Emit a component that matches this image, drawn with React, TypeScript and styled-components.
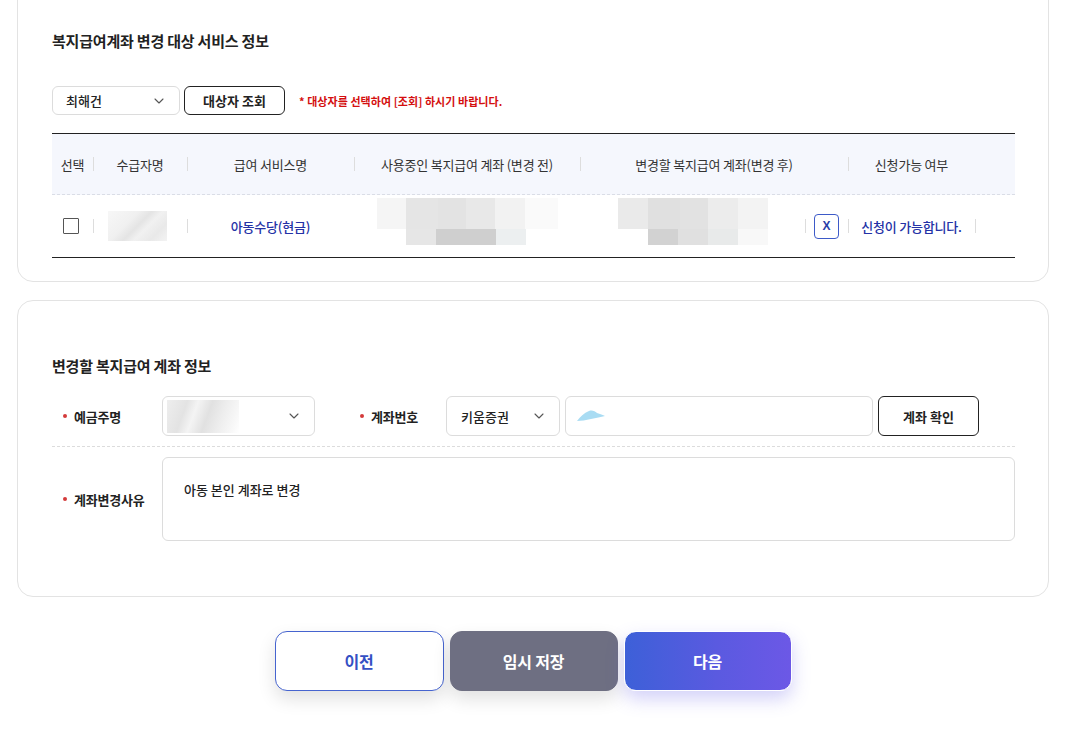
import React from "react";
import styled, { createGlobalStyle } from "styled-components";
import { ChevronDown } from "lucide-react";

const Global = createGlobalStyle`
  * { box-sizing: border-box; }
  html, body { margin: 0; padding: 0; background: #fff; }
  body {
    font-family: "Noto Sans CJK KR", "Noto Sans", sans-serif;
    color: #222;
    overflow: hidden;
  }
`;

const Page = styled.div`
  padding: 0 33px 40px 17px;
`;

const Card = styled.section<{ $first?: boolean }>`
  border: 1px solid #e3e3e3;
  border-radius: 16px;
  background: #fff;
  margin-top: ${(p) => (p.$first ? "-40px" : "18px")};
  padding: ${(p) => (p.$first ? "69px 33px 23px 34px" : "54px 33px 55px 34px")};
`;

const Title = styled.h2`
  margin: 0;
  font-size: 15px;
  line-height: 22px;
  font-weight: 700;
  color: #222;
  letter-spacing: -0.2px;
`;

const Controls = styled.div`
  margin-top: 34px;
  display: flex;
  align-items: center;
  gap: 4px;
`;

const SelectBox = styled.div<{ $w: number; $h: number; $pl?: number }>`
  width: ${(p) => p.$w}px;
  height: ${(p) => p.$h}px;
  border: 1px solid #dcdcdc;
  border-radius: 6px;
  background: #fff;
  display: flex;
  align-items: center;
  justify-content: space-between;
  padding: 0 12px 0 ${(p) => p.$pl ?? 13}px;
  font-size: 13px;
  font-weight: 500;
  color: #222;
  flex: none;
  svg { color: #555; }
`;

const OutlineButton = styled.button<{ $w: number; $h: number }>`
  width: ${(p) => p.$w}px;
  height: ${(p) => p.$h}px;
  border: 1px solid #222;
  border-radius: 6px;
  background: #fff;
  font-family: inherit;
  font-size: 13px;
  font-weight: 700;
  color: #222;
  flex: none;
  padding: 0;
`;

const Notice = styled.span`
  margin-left: 10px;
  font-size: 11px;
  font-weight: 700;
  color: #d40f0f;
  letter-spacing: 0.05px;
`;

const COLS = "41px 94px 167px 226px 225px 43px 127px 40px";

const Table = styled.div`
  margin-top: 18px;
  border-top: 1px solid #222;
  border-bottom: 1px solid #222;
`;

const HeadRow = styled.div`
  display: grid;
  grid-template-columns: ${COLS};
  height: 61px;
  background: #f5f7fd;
  border-bottom: 1px dashed #dadde6;
`;

const BodyRow = styled.div`
  display: grid;
  grid-template-columns: ${COLS};
  height: 62px;
`;

const Cell = styled.div<{ $sep?: boolean; $span?: number }>`
  position: relative;
  display: flex;
  align-items: center;
  justify-content: center;
  font-size: 13px;
  color: #333;
  letter-spacing: -0.2px;
  grid-column: ${(p) => (p.$span ? `span ${p.$span}` : "auto")};
  &::before {
    content: "";
    display: ${(p) => (p.$sep ? "block" : "none")};
    position: absolute;
    left: 0;
    top: 50%;
    width: 1px;
    height: 14px;
    margin-top: -7px;
    background: #dddddd;
  }
`;

const Checkbox = styled.span`
  width: 16px;
  height: 16px;
  margin-right: 3px;
  border: 1.5px solid #555;
  border-radius: 1px;
  background: #fff;
`;

const LinkText = styled.span`
  color: #2432a6;
  font-size: 13px;
  font-weight: 500;
`;

const XButton = styled.span`
  width: 25px;
  height: 25px;
  border: 1px solid #3d5ac8;
  border-radius: 4px;
  display: flex;
  align-items: center;
  justify-content: center;
  color: #2a3ea8;
  font-size: 12px;
  font-weight: 700;
  font-family: "Liberation Sans", sans-serif;
`;

const NameBlur = styled.span`
  width: 59px;
  height: 30px;
  margin-right: 6px;
  background: linear-gradient(
    135deg,
    #f7f7f7 0%,
    #f0f0f0 35%,
    #e4e4e4 50%,
    #f1f1f1 62%,
    #e9e9e9 80%,
    #f3f3f3 100%
  );
`;

const Mosaic = styled.div`
  display: flex;
  flex-direction: column;
  align-self: flex-start;
  margin-top: 3px;
`;

const MosaicLine = styled.div<{ $h: number; $offset: number }>`
  display: flex;
  height: ${(p) => p.$h}px;
  padding-left: ${(p) => p.$offset}px;
`;

const Tile = styled.span<{ $w: number; $c: string }>`
  width: ${(p) => p.$w}px;
  height: 100%;
  background: ${(p) => p.$c};
`;

type TileDef = [number, string];

const MosaicBlock: React.FC<{ top: TileDef[]; bottom: TileDef[]; offset: number }> = ({
  top,
  bottom,
  offset,
}) => (
  <Mosaic>
    <MosaicLine $h={31} $offset={0}>
      {top.map(([w, c], i) => (
        <Tile key={i} $w={w} $c={c} />
      ))}
    </MosaicLine>
    <MosaicLine $h={16} $offset={offset}>
      {bottom.map(([w, c], i) => (
        <Tile key={i} $w={w} $c={c} />
      ))}
    </MosaicLine>
  </Mosaic>
);

const Form = styled.div`
  margin-top: 19px;
`;

const FormRow = styled.div<{ $dashed?: boolean }>`
  display: flex;
  align-items: center;
  padding: ${(p) => (p.$dashed ? "0 0 10px" : "10px 0 0")};
  border-bottom: ${(p) => (p.$dashed ? "1px dashed #dcdcdc" : "none")};
`;

const Label = styled.div<{ $w: number }>`
  width: ${(p) => p.$w}px;
  flex: none;
  padding-left: 11px;
  font-size: 13px;
  font-weight: 700;
  color: #222;
  display: flex;
  align-items: center;
  gap: 7px;
  letter-spacing: -0.2px;
  &::before {
    content: "";
    width: 4px;
    height: 4px;
    border-radius: 50%;
    background: #d43a3a;
  }
`;

const Gap = styled.span<{ $w: number }>`
  width: ${(p) => p.$w}px;
  flex: none;
`;

const OwnerBlur = styled.span`
  width: 72px;
  height: 33px;
  background: linear-gradient(
    110deg,
    #eeeeee 0%,
    #e3e3e3 25%,
    #f4f4f4 38%,
    #e1e1e1 55%,
    #ededed 72%,
    #f8f8f8 90%,
    #ffffff 100%
  );
`;

const TextInput = styled.div`
  width: 308px;
  height: 40px;
  border: 1px solid #dcdcdc;
  border-radius: 6px;
  background: #fff;
  display: flex;
  align-items: center;
  padding-left: 10px;
  flex: none;
`;

const ReasonBox = styled.div`
  flex: 1;
  height: 84px;
  border: 1px solid #dcdcdc;
  border-radius: 6px;
  padding: 22px 21px;
  font-size: 13px;
  font-weight: 500;
  color: #222;
  line-height: 20px;
`;

const Footer = styled.div`
  margin-top: 34px;
  display: flex;
  justify-content: center;
  gap: 6px;
`;

const BigButton = styled.button<{ $variant: "prev" | "save" | "next"; $w: number }>`
  width: ${(p) => p.$w}px;
  height: 60px;
  border-radius: 12px;
  font-family: inherit;
  font-size: 16px;
  font-weight: 700;
  letter-spacing: -0.2px;
  padding: 0;
  border: 1px solid
    ${(p) => (p.$variant === "prev" ? "#4664cf" : p.$variant === "save" ? "#6e6f82" : "#ffffff")};
  color: ${(p) => (p.$variant === "prev" ? "#3450c4" : "#fff")};
  background: ${(p) =>
    p.$variant === "prev"
      ? "#fff"
      : p.$variant === "save"
      ? "#6e6f82"
      : "linear-gradient(90deg, #3d60d8 0%, #5a5ae0 55%, #6c58e6 100%)"};
  box-shadow: ${(p) =>
    p.$variant === "next"
      ? "0 8px 18px rgba(96, 90, 230, 0.28)"
      : "0 8px 18px rgba(0, 0, 0, 0.12)"};
`;

const Brush = () => (
  <svg width="30" height="14" viewBox="0 0 30 14">
    <path
      d="M1 12 C4 8 8 4 13 2 C16 1 19 2 21 4 C24 5 27 6 29 7 C25 8 20 9 15 10 C10 11 5 12 1 12 Z"
      fill="#a9dcf3"
    />
  </svg>
);

const mosaic1Top: TileDef[] = [
  [29, "#f5f5f5"],
  [32, "#e5e5e5"],
  [28, "#e3e3e3"],
  [29, "#e8e8e8"],
  [30, "#f2f2f2"],
  [33, "#fafafa"],
];
const mosaic1Bottom: TileDef[] = [
  [30, "#e6e6e6"],
  [60, "#cfcfcf"],
  [30, "#eceff0"],
];
const mosaic2Top: TileDef[] = [
  [30, "#eaeaea"],
  [32, "#e0e0e0"],
  [28, "#e2e2e2"],
  [30, "#ececec"],
  [30, "#f3f3f3"],
];
const mosaic2Bottom: TileDef[] = [
  [30, "#d2d2d2"],
  [30, "#e0e0e0"],
  [30, "#e8eaea"],
  [30, "#f8f8f8"],
];

export default function App() {
  return (
    <>
      <Global />
      <Page>
        <Card $first>
          <Title>복지급여계좌 변경 대상 서비스 정보</Title>
          <Controls>
            <SelectBox $w={128} $h={29}>
              <span>최해건</span>
              <ChevronDown size={16} strokeWidth={1.6} />
            </SelectBox>
            <OutlineButton $w={101} $h={29}>
              대상자 조회
            </OutlineButton>
            <Notice>* 대상자를 선택하여 [조회] 하시기 바랍니다.</Notice>
          </Controls>
          <Table>
            <HeadRow>
              <Cell>선택</Cell>
              <Cell $sep>수급자명</Cell>
              <Cell $sep>급여 서비스명</Cell>
              <Cell $sep>사용중인 복지급여 계좌 (변경 전)</Cell>
              <Cell $sep $span={2}>
                변경할 복지급여 계좌(변경 후)
              </Cell>
              <Cell $sep>신청가능 여부</Cell>
              <Cell />
            </HeadRow>
            <BodyRow>
              <Cell>
                <Checkbox />
              </Cell>
              <Cell $sep>
                <NameBlur />
              </Cell>
              <Cell $sep>
                <LinkText>아동수당(현금)</LinkText>
              </Cell>
              <Cell $sep={false}>
                <MosaicBlock top={mosaic1Top} bottom={mosaic1Bottom} offset={29} />
              </Cell>
              <Cell>
                <MosaicBlock top={mosaic2Top} bottom={mosaic2Bottom} offset={30} />
              </Cell>
              <Cell $sep>
                <XButton>X</XButton>
              </Cell>
              <Cell $sep>
                <LinkText>신청이 가능합니다.</LinkText>
              </Cell>
              <Cell $sep />
            </BodyRow>
          </Table>
        </Card>

        <Card>
          <Title>변경할 복지급여 계좌 정보</Title>
          <Form>
            <FormRow $dashed>
              <Label $w={110}>예금주명</Label>
              <SelectBox $w={153} $h={40} $pl={4}>
                <OwnerBlur />
                <ChevronDown size={16} strokeWidth={1.6} />
              </SelectBox>
              <Gap $w={34} />
              <Label $w={97}>계좌번호</Label>
              <SelectBox $w={114} $h={40} $pl={14}>
                <span>키움증권</span>
                <ChevronDown size={16} strokeWidth={1.6} />
              </SelectBox>
              <Gap $w={5} />
              <TextInput>
                <Brush />
              </TextInput>
              <Gap $w={5} />
              <OutlineButton $w={101} $h={40}>
                계좌 확인
              </OutlineButton>
            </FormRow>
            <FormRow>
              <Label $w={110}>계좌변경사유</Label>
              <ReasonBox>아동 본인 계좌로 변경</ReasonBox>
            </FormRow>
          </Form>
        </Card>

        <Footer>
          <BigButton $variant="prev" $w={169}>
            이전
          </BigButton>
          <BigButton $variant="save" $w={168}>
            임시 저장
          </BigButton>
          <BigButton $variant="next" $w={168}>
            다음
          </BigButton>
        </Footer>
      </Page>
    </>
  );
}
